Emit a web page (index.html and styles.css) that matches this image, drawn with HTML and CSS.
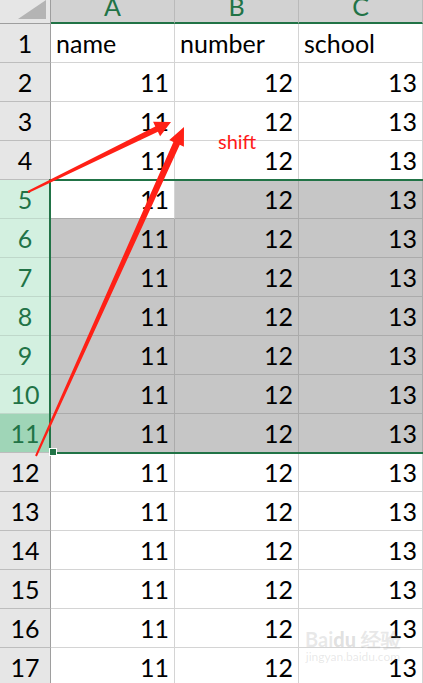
FILE: index.html
```html
<!DOCTYPE html>
<html lang="en">
<head>
    <meta charset="UTF-8">
    <meta name="viewport" content="width=device-width, initial-scale=1.0">
    <title>Sheet1 - shift select</title>
    <link rel="stylesheet" href="styles.css">
</head>
<body>

<div class="sheet">
    <!-- column headers -->
    <div class="corner"><span class="corner-tri"></span></div>
    <div class="col-head">A</div>
    <div class="col-head">B</div>
    <div class="col-head">C</div>

    <div class="row-head">1</div>
    <div class="cell">name</div>
    <div class="cell">number</div>
    <div class="cell">school</div>

    <div class="row-head">2</div>
    <div class="cell num">11</div>
    <div class="cell num">12</div>
    <div class="cell num">13</div>

    <div class="row-head">3</div>
    <div class="cell num">11</div>
    <div class="cell num">12</div>
    <div class="cell num">13</div>

    <div class="row-head">4</div>
    <div class="cell num">11</div>
    <div class="cell num">12</div>
    <div class="cell num">13</div>

    <!-- selected block, A5 is the active cell -->
    <div class="row-head row-sel">5</div>
    <div class="cell num active">11</div>
    <div class="cell num sel">12</div>
    <div class="cell num sel">13</div>

    <div class="row-head row-sel">6</div>
    <div class="cell num sel">11</div>
    <div class="cell num sel">12</div>
    <div class="cell num sel">13</div>

    <div class="row-head row-sel">7</div>
    <div class="cell num sel">11</div>
    <div class="cell num sel">12</div>
    <div class="cell num sel">13</div>

    <div class="row-head row-sel">8</div>
    <div class="cell num sel">11</div>
    <div class="cell num sel">12</div>
    <div class="cell num sel">13</div>

    <div class="row-head row-sel">9</div>
    <div class="cell num sel">11</div>
    <div class="cell num sel">12</div>
    <div class="cell num sel">13</div>

    <div class="row-head row-sel">10</div>
    <div class="cell num sel">11</div>
    <div class="cell num sel">12</div>
    <div class="cell num sel">13</div>

    <div class="row-head row-cur">11</div>
    <div class="cell num sel">11</div>
    <div class="cell num sel">12</div>
    <div class="cell num sel">13</div>

    <div class="row-head">12</div>
    <div class="cell num">11</div>
    <div class="cell num">12</div>
    <div class="cell num">13</div>

    <div class="row-head">13</div>
    <div class="cell num">11</div>
    <div class="cell num">12</div>
    <div class="cell num">13</div>

    <div class="row-head">14</div>
    <div class="cell num">11</div>
    <div class="cell num">12</div>
    <div class="cell num">13</div>

    <div class="row-head">15</div>
    <div class="cell num">11</div>
    <div class="cell num">12</div>
    <div class="cell num">13</div>

    <div class="row-head">16</div>
    <div class="cell num">11</div>
    <div class="cell num">12</div>
    <div class="cell num">13</div>

    <div class="row-head">17</div>
    <div class="cell num">11</div>
    <div class="cell num">12</div>
    <div class="cell num">13</div>

    <!-- selection outline + fill handle -->
    <div class="selection"><span class="handle"></span></div>

    <!-- red annotation arrows -->
    <svg class="marks" width="423" height="683" viewBox="0 0 423 683">
        <polygon fill="#ff2016" points="28.4,192.9 27.6,191.1 155.3,126.4 153.1,121.8 171,122 160.1,136.2 157.9,131.7"/>
        <polygon fill="#ff2016" points="36.9,456.4 35.1,455.6 173.4,142.0 169.3,140.1 184,127 183.9,146.7 179.8,144.8"/>
    </svg>
    <div class="note">shift</div>

    <div class="watermark">
        <div class="wm-logo">Bai<b>du</b> 经验</div>
        <div class="wm-url">jingyan.baidu.com</div>
    </div>
</div>

</body>
</html>
```

FILE: styles.css
```css
body {
    margin: 0;
    padding: 0;
    background-color: #ffffff;
    font-family: Lato, "Noto Sans", sans-serif;
    color: #000;
    overflow: hidden;
}
.sheet {
    position: relative;
    display: grid;
    grid-template-columns: 51px 124px 124px 124px;
    grid-template-rows: 24px;
    grid-auto-rows: 39px;
    width: 423px;
}
/* header row */
.corner {
    position: relative;
    background-color: #e6e6e6;
    border-right: 1px solid #9e9e9e;
    border-bottom: 1px solid #9e9e9e;
    box-sizing: border-box;
}
.corner-tri {
    position: absolute;
    right: 4px;
    bottom: 4px;
    width: 0;
    height: 0;
    border-left: 28px solid transparent;
    border-bottom: 19px solid #b4b4b4;
}
.col-head {
    background-color: #d2d2d2;
    color: #217346;
    font-size: 25px;
    line-height: 12px;
    text-align: center;
    border-right: 1px solid #bababa;
    border-bottom: 2px solid #217346;
    box-sizing: border-box;
    overflow: hidden;
}
/* row headers */
.row-head {
    background-color: #e6e6e6;
    font-size: 25px;
    text-align: center;
    line-height: 38px;
    border-right: 1px solid #9e9e9e;
    border-bottom: 1px solid #bdbdbd;
    box-sizing: border-box;
}
.row-sel {
    background-color: #d3f0e0;
    color: #217346;
    border-bottom-color: #bfd8ca;
}
.row-cur {
    background-color: #9fd5b7;
    color: #217346;
}
/* cells */
.cell {
    font-size: 25px;
    line-height: 38px;
    padding: 0 5px;
    border-right: 1px solid #d4d4d4;
    border-bottom: 1px solid #d4d4d4;
    box-sizing: border-box;
    white-space: nowrap;
}
.num {
    text-align: right;
}
.sel {
    background-color: #c6c6c6;
    border-color: #ababab;
}
.active {
    background-color: #ffffff;
    border-bottom-color: #ababab;
}
/* overlays */
.selection {
    position: absolute;
    left: 49px;
    top: 179px;
    width: 380px;
    height: 275px;
    border: 2px solid #217346;
    border-right: none;
    box-sizing: border-box;
    pointer-events: none;
}
.handle {
    position: absolute;
    left: -2px;
    bottom: -4px;
    width: 6px;
    height: 6px;
    background-color: #217346;
    border: 1px solid #ffffff;
}
.marks {
    position: absolute;
    left: 0;
    top: 0;
}
.note {
    position: absolute;
    left: 218px;
    top: 129px;
    color: #ff1a1a;
    font-size: 20px;
}
.watermark {
    position: absolute;
    left: 305px;
    top: 628px;
    color: rgba(150, 150, 150, 0.22);
    text-align: center;
    white-space: nowrap;
}
.wm-logo {
    font-size: 20px;
    font-weight: bold;
    line-height: 22px;
}
.wm-logo b {
    color: rgba(150, 150, 150, 0.3);
}
.wm-url {
    font-size: 12px;
    line-height: 14px;
}
```
